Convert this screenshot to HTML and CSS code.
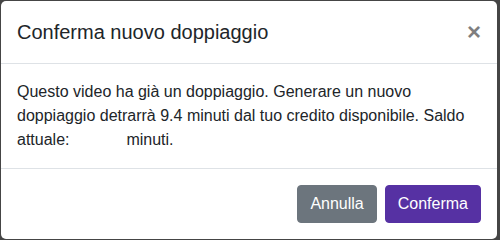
FILE: index.html
```html
<!DOCTYPE html>
<html lang="it">
<head>
<meta charset="utf-8">
<link rel="stylesheet" href="styles.css">
</head>
<body>
<div class="modal">
  <div class="modal-header">
    <h5 class="modal-title">Conferma nuovo doppiaggio</h5>
    <button class="close" type="button" aria-label="Close">&times;</button>
  </div>
  <div class="modal-body">
    Questo video ha già un doppiaggio. Generare un nuovo doppiaggio detrarrà 9.4 minuti dal tuo credito disponibile. Saldo attuale: <span class="balance"></span> minuti.
  </div>
  <div class="modal-footer">
    <button class="btn btn-secondary" type="button">Annulla</button>
    <button class="btn btn-primary" type="button">Conferma</button>
  </div>
</div>
</body>
</html>
```

FILE: styles.css
```css
html, body {
  margin: 0;
  padding: 0;
  height: 100%;
}
body {
  background: #454545;
  font-family: "Liberation Sans", Arial, sans-serif;
  color: #212529;
  padding: 1px 3px 2px 1px;
  box-sizing: border-box;
}
.modal {
  background: #fff;
  border-radius: 5px;
  display: flex;
  flex-direction: column;
  width: 496px;
}
.modal-header {
  display: flex;
  align-items: flex-start;
  justify-content: space-between;
  padding: 16px;
  border-bottom: 1px solid #dee2e6;
}
.modal-title {
  margin: 0;
  font-size: 20px;
  font-weight: 500;
  line-height: 30px;
}
.close {
  background: transparent;
  border: 0;
  padding: 16px;
  margin: -16px -16px -16px auto;
  font-family: "Liberation Sans", Arial, sans-serif;
  font-size: 24px;
  font-weight: 700;
  line-height: 30px;
  color: #000;
  opacity: 0.5;
  text-shadow: 0 1px 0 #fff;
  cursor: pointer;
}
.modal-body {
  padding: 16px;
  font-size: 16px;
  line-height: 24px;
}
.balance {
  display: inline-block;
  width: 48px;
}
.modal-footer {
  display: flex;
  justify-content: flex-end;
  align-items: center;
  padding: 12px;
  border-top: 1px solid #dee2e6;
}
.btn {
  margin: 4px;
  border: 1px solid transparent;
  border-radius: 4px;
  padding: 6px 12px;
  font-family: "Liberation Sans", Arial, sans-serif;
  font-size: 16px;
  line-height: 24px;
  color: #fff;
  cursor: pointer;
}
.btn-secondary {
  background: #6c757d;
  border-color: #6c757d;
}
.btn-primary {
  background: #5631a3;
  border-color: #5631a3;
}
```
